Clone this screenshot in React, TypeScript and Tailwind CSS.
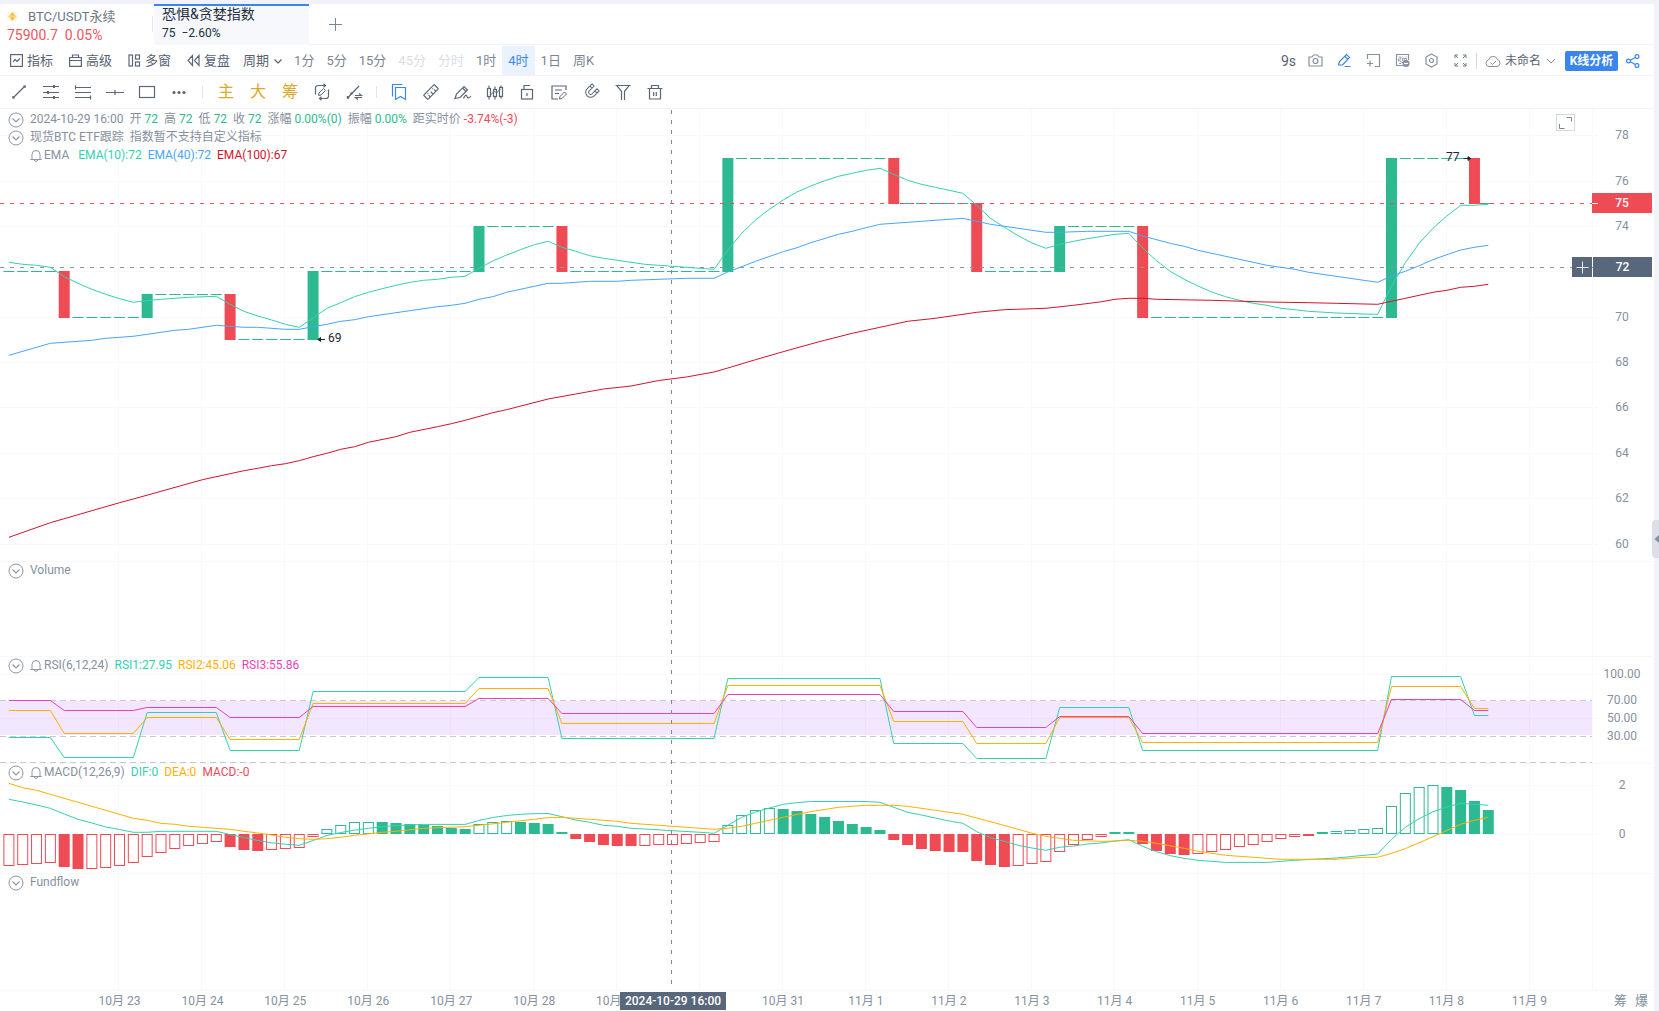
import type { ReactNode } from 'react';

type Pt = [number, number];

const PLOT_W = 1593;
const STEP = 13.826;
const cx = (i: number) => 8.9 + STEP * i;

const GREEN = '#2dba92';
const RED = '#ef4b55';
const TEAL = '#35d0b2';
const BLUE = '#45a6ff';
const CRIMSON = '#d0142a';
const ORANGE = '#ffb000';
const PINK = '#ec3fbb';

const ema10: Pt[] = [
  [0, 262.3], [1, 264.3], [2, 265.3], [3, 267.3], [4, 276.7], [5, 283.3], [6, 289.3], [7, 294.3], [8, 298.7], [9, 302.3],
  [10, 300.7], [11, 299.3], [13, 297.3], [15, 296.3], [16, 304.3], [17, 311.3], [18, 316], [19, 320], [20, 324.3], [21, 327.3],
  [22, 318], [23, 308.3], [24, 302.7], [25, 296.7], [26, 292.3], [27, 288.7], [28, 285.3], [29, 282.3], [30, 280.3], [31, 279.3],
  [32, 277.3], [33, 276.3], [34, 268.3], [35, 261], [36, 255], [37, 249.7], [38, 244.7], [39, 241.3], [40, 247.3], [41, 251.3],
  [42, 255.7], [43, 258.3], [46, 264.3], [48, 266.3], [50, 268.3], [51, 269.3], [52, 250], [53, 233.3], [54, 220], [55, 209.3],
  [56, 200], [57, 192], [58, 186], [59, 180.7], [60, 176.3], [61, 173.3], [62, 170.3], [63, 168.3], [64, 174.3], [65, 180.3],
  [66, 184.3], [67, 187.3], [68, 190.3], [69, 193.3], [70, 205.3], [71, 218.3], [72, 227.3], [73, 235.7], [74, 243], [75, 248.3],
  [76, 244.3], [77, 241.3], [78, 238.7], [79, 236.5], [80, 234.3], [81, 233.3], [82, 248], [83, 260.7], [84, 271.3], [85, 279.3],
  [86, 286], [87, 292], [88, 296.7], [89, 300.3], [90, 303.3], [91, 305.3], [92, 308.3], [93, 309.7], [94, 311.3], [96, 313],
  [98, 314], [99, 314.3], [100, 286], [101, 262.7], [102, 243.3], [103, 228.3], [104, 216], [105, 205.3], [106, 205.3], [107, 204.3],
];
const ema40: Pt[] = [
  [0, 355.3], [3, 343.3], [6, 340.3], [7, 338.3], [9, 336.3], [12, 330.3], [13, 329.3], [15, 325.3], [17, 327.3], [18, 327.3],
  [20, 329.3], [21, 329.3], [22, 326.7], [23, 324.3], [24, 321.3], [25, 319.7], [26, 316.7], [31, 306.7], [32, 305.3], [33, 303.3],
  [34, 299.3], [35, 296.7], [36, 292.3], [38, 286.3], [39, 283.3], [40, 283.3], [42, 281.3], [44, 281.3], [45, 280.3], [49, 278.3],
  [51, 278.3], [52, 272], [54, 261.3], [56, 251.7], [57, 247.7], [58, 242.7], [60, 234.3], [61, 231.3], [62, 227.7], [63, 224.3],
  [66, 221.3], [69, 218.3], [70, 221.3], [71, 224.3], [74, 230.3], [75, 232.3], [76, 232.3], [78, 231.3], [81, 231.3], [82, 236],
  [84, 243.3], [85, 246.3], [86, 250.3], [91, 265.3], [93, 269.3], [94, 272.3], [99, 282.3], [100, 276], [101, 271.3], [102, 265.7],
  [103, 259.7], [104, 254.7], [105, 250], [106, 247.3], [107, 245.3],
];
const ema100: Pt[] = [
  [0, 537.3], [3, 522.7], [8, 502.7], [9, 499], [14, 479.7], [17, 470.7], [18, 468.3], [19, 465.7], [20, 463.7], [21, 460.7],
  [22, 456.7], [23, 453.3], [24, 449.3], [25, 446.7], [26, 442.3], [28, 436.7], [29, 432.3], [31, 426.7], [32, 423.7], [33, 420.3],
  [35, 412.7], [36, 409.7], [39, 399], [41, 394], [43, 389], [45, 386], [47, 380.5], [49, 377], [51, 372],
  [52, 368], [54, 359.7], [56, 351.7], [58, 344], [59, 340.3], [61, 333.3], [63, 327.3], [65, 321.3], [67, 318.3], [69, 314.3],
  [70, 312.3], [72, 309.7], [75, 308.3], [77, 305.3], [79, 301.8], [80, 299.3], [81, 298.3], [82, 298.3], [83, 299.3], [87, 300.3],
  [91, 302], [94, 302.7], [96, 303.3], [99, 304.3], [100, 301.3], [101, 298.3], [103, 292.3], [104, 290.3], [105, 287.3], [106, 286.3],
  [107, 284.3],
];

/* first and last bar of every stretch of equal RSI values */
const runs: Pt[] = [
  [0, 3], [4, 9], [10, 15], [16, 21], [22, 33], [34, 39], [40, 51], [52, 63], [64, 69], [70, 75], [76, 81], [82, 99], [100, 105], [106, 107],
];
const rsiSeries: { color: string; ys: number[] }[] = [
  { color: TEAL, ys: [737.5, 757.5, 712.5, 750.5, 691.5, 677.5, 738.5, 678.5, 743.5, 758.5, 707.5, 750.5, 676.5, 715.5] },
  { color: ORANGE, ys: [710.5, 733.5, 717.5, 739.5, 703.5, 688.5, 723.5, 685.5, 721.5, 743.5, 717.5, 742.5, 686.5, 708.5] },
  { color: PINK, ys: [700.5, 710.5, 707.5, 717.5, 706.5, 698.5, 713.5, 694.5, 711.5, 727.5, 716.5, 733.5, 699.5, 710.5] },
];

const dif: Pt[] = [
  [0, 799.3], [1, 802], [2, 805], [3, 808.3], [4, 814], [5, 819.3], [6, 823], [7, 827], [8, 829.5], [9, 832.3],
  [10, 832.3], [11, 831.3], [15, 831.3], [16, 834.5], [17, 837.5], [18, 840.5], [19, 842.8], [20, 844.2], [21, 845.3], [22, 840.5],
  [23, 835.5], [24, 832.5], [25, 830.2], [26, 828.3], [27, 826.7], [28, 825.5], [30, 824.4], [33, 824.4], [34, 820.5], [35, 817.5],
  [36, 815.5], [37, 814.3], [38, 813.7], [39, 813.5], [40, 816.7], [41, 820], [42, 822.3], [43, 825.3], [44, 826.3], [45, 828.3],
  [46, 829], [48, 830.7], [50, 832.3], [51, 833.3], [52, 825.3], [53, 817.3], [54, 812], [55, 808], [56, 804.3], [57, 802.7],
  [58, 801.5], [62, 801.5], [63, 802.3], [64, 807.3], [65, 812.3], [66, 815], [67, 818], [68, 821], [69, 823.3], [70, 831.7],
  [71, 837.7], [72, 841.3], [73, 845.3], [74, 848], [75, 850.3], [76, 847.3], [77, 846], [78, 844], [79, 843], [80, 841],
  [81, 839.7], [82, 846.3], [83, 851.7], [84, 855.7], [85, 858.3], [86, 860.3], [88, 862.4], [91, 862.4], [93, 860.3], [96, 858],
  [99, 854], [100, 839.3], [101, 827.3], [102, 818.7], [103, 811.7], [104, 807], [105, 803.3], [106, 804.3], [107, 805.3],
];
const dea: Pt[] = [
  [0, 783.3], [1, 787.7], [2, 790.3], [3, 794.3], [9, 818.3], [10, 820.3], [11, 823.3], [12, 824.3], [13, 826.3], [16, 829.3],
  [17, 831.3], [18, 833], [19, 835], [20, 837.3], [21, 838.7], [22, 839.3], [23, 838.7], [24, 837.3], [25, 835.3], [27, 832.3],
  [28, 831.3], [30, 828.3], [31, 827.7], [33, 826.7], [34, 825.3], [36, 822.3], [38, 819.3], [39, 817.7], [40, 817.3], [41, 818.3],
  [44, 821.3], [45, 823.3], [48, 826.3], [51, 829.3], [52, 828.3], [53, 826.3], [54, 823.3], [56, 817.3], [58, 811.7], [60, 807.3],
  [62, 805.3], [64, 805.3], [65, 806.3], [67, 810.3], [69, 814.3], [70, 818], [71, 821.7], [73, 829.3], [74, 833.3], [75, 836.3],
  [76, 838.3], [77, 840.3], [79, 841.3], [80, 841], [81, 840.3], [82, 841.3], [83, 843.3], [85, 848.3], [86, 851.3], [88, 855.3],
  [92, 859.3], [96, 859.3], [98, 857.3], [99, 857.3], [100, 853.3], [101, 848.7], [103, 836.7], [105, 824.3], [106, 820.3], [107, 817.3],
];

/* signed bar heights of the MACD histogram */
const hist = [
  -32, -31, -30, -29, -33, -35, -35, -34, -32, -29, -23, -19, -15, -12, -10, -8, -13, -16, -17, -16, -15, -14, -3,
  5, 9, 12, 12, 12, 11, 10, 9, 8, 6, 5, 10, 12, 13, 12, 11, 10, 2,
  -5, -8, -11, -12, -12, -12, -11, -11, -10, -9, -8, 9, 19, 24, 26, 25, 23, 20, 17, 13, 10, 7, 4,
  -6, -11, -15, -17, -18, -18, -27, -31, -33, -32, -30, -28, -18, -11, -6, -3, 2, 2,
  -10, -17, -20, -21, -20, -18, -16, -13, -11, -8, -5, -3, -2, 2, 3, 4, 5, 6, 28, 41, 47, 49, 47, 44, 33, 24,
];
const filledRanges: Pt[] = [
  [4, 5], [16, 18], [27, 33], [37, 45], [56, 72], [80, 85], [94, 95], [104, 107],
];
const isFilled = (i: number) => filledRanges.some(([a, b]) => i >= a && i <= b);

/* [bar, top, bottom, rising] */
const candles: [number, number, number, boolean][] = [
  [4, 271, 318, false], [10, 294, 318, true], [16, 294, 340, false], [22, 271, 340, true], [34, 226, 272, true],
  [40, 226, 272, false], [52, 158, 272, true], [64, 158, 204, false], [70, 203, 272, false], [76, 226, 272, true],
  [82, 226, 318, false], [100, 158, 318, true], [106, 158, 204, false],
];
/* [first bar, last bar, y] */
const flats: [number, number, number][] = [
  [0, 3, 271.5], [5, 9, 317.5], [11, 15, 294.5], [17, 21, 339.5], [23, 33, 271.5], [35, 39, 226.5], [41, 51, 271.5],
  [53, 63, 158.5], [65, 69, 203.5], [71, 75, 271.5], [77, 81, 226.5], [83, 99, 317.5], [101, 105, 158.5], [107, 107, 203.5],
];

const toPoints = (pts: Pt[]) => pts.map(([i, y]) => `${cx(i)},${y}`).join(' ');
const pct = (x: number) => `${(x / PLOT_W) * 100}%`;

function Line({ pts, color }: { pts: Pt[]; color: string }) {
  return <polyline points={toPoints(pts)} fill="none" stroke={color} strokeWidth={1} />;
}

function HLine({ y, color, dash, x2 = PLOT_W }: { y: number; color: string; dash?: string; x2?: number }) {
  return <line x1={0} x2={x2} y1={y} y2={y} stroke={color} strokeDasharray={dash} />;
}

const dayLines = Array.from({ length: 18 }, (_, k) => 118.5 + 83 * k);

function Pane({ top, height, size, grid = [], labels, ticks = [], overlay, children }: {
  top: number;
  height: number;
  size: string;
  grid?: number[];
  labels: ReactNode;
  ticks?: [number, string][];
  overlay?: ReactNode;
  children?: ReactNode;
}) {
  return (
    <section className={`flex ${size} border-b border-[#f7f8fa]`}>
      <div className="relative min-w-0 flex-1">
        <svg
          className="absolute inset-0 h-full w-full overflow-visible"
          viewBox={`0 ${top} ${PLOT_W} ${height}`}
          preserveAspectRatio="none"
          aria-hidden="true"
        >
          {[...dayLines, 1592.5].map((x) => (
            <line key={x} x1={x} x2={x} y1={top} y2={top + height} stroke="#f8f9fb" />
          ))}
          {grid.map((y) => (
            <HLine key={y} y={y} color="#f8f9fb" x2={1598} />
          ))}
          {children}
        </svg>
        <div className="relative pl-2">{labels}</div>
        {overlay}
      </div>
      <div className="relative w-[59px] shrink-0 text-center">
        {ticks.map(([y, text]) => (
          <span key={text} className="absolute inset-x-0 -translate-y-1/2 pr-px leading-4" style={{ top: y - top }}>
            {text}
          </span>
        ))}
      </div>
    </section>
  );
}

function Collapse() {
  return (
    <button type="button" aria-label="收起" className="flex h-4 w-4 items-center justify-center">
      <svg width="16" height="18" viewBox="0 0 16 18" className="shrink-0" fill="none" stroke="#8d97a5">
        <circle cx="8" cy="10" r="7" />
        <path d="M4.5 8.500 8 12l3.500-3.500" strokeWidth="1.200" />
      </svg>
    </button>
  );
}

function Bell() {
  return (
    <svg width="12" height="13" viewBox="0 0 12 13" fill="none" stroke="#8d97a5">
      <path d="M.3 10.500h11.400M2 10.500V5.500a4 4 0 0 1 8 0v5M4.300 11c.4 1.800 3 1.800 3.400 0" />
    </svg>
  );
}

function Ico({ children, size = 18, color = '#5b6778' }: { children: ReactNode; size?: number; color?: string }) {
  return (
    <svg width={size} height={size} viewBox={`0 0 ${size} ${size}`} fill="none" stroke={color} strokeWidth="1.2" aria-hidden="true">
      {children}
    </svg>
  );
}

const drawTools: { name: string; icon: ReactNode }[] = [
  { name: '线段', icon: <Ico><path d="m4 14 10-10" /><rect x="2.2" y="13.2" width="2.4" height="2.4" fill="#5b6778" stroke="none" /><rect x="13.4" y="2.4" width="2.4" height="2.4" fill="#5b6778" stroke="none" /></Ico> },
  { name: '平行线', icon: <Ico><path d="M1 3.5h16M1 9.5h16M1 14.5h16" /><path d="M12 2v3M6 8v3M12 13v3" strokeWidth="2" /></Ico> },
  { name: '价格通道', icon: <Ico><path d="M1 4.5h16M1 9.5h16M1 14.5h16M1.5 2.5v4M16.5 12.5v4" /></Ico> },
  { name: '水平线', icon: <Ico><path d="M0 9.5h18M9 7v5" /></Ico> },
  { name: '矩形', icon: <Ico><rect x="1.5" y="3.5" width="15" height="11" /></Ico> },
  { name: '更多', icon: <Ico><g fill="#5b6778" stroke="none"><circle cx="4" cy="9.5" r="1.6" /><circle cx="9" cy="9.5" r="1.6" /><circle cx="14" cy="9.5" r="1.6" /></g></Ico> },
];

const goldTools = ['主', '大', '筹'];

const syncTools: { name: string; icon: ReactNode }[] = [
  { name: '连续绘制', icon: <Ico><path d="M2.500 11.500V5A2.500 2.500 0 0 1 5 2.500h7.500M10.500.8l2 1.700-2 1.700M15.500 6.500v6.500a2.500 2.500 0 0 1-2.500 2.500H6.500M8.500 13.800l-2 1.700 2 1.700" /><path d="m5.500 12.500.5-2.500 4.500-4.500 2 2L8 12z" strokeWidth="1" /></Ico> },
  { name: '画线切换', icon: <Ico><path d="M2.500 15 14 3" /><circle cx="3" cy="14.500" r=".8" fill="#5b6778" /><circle cx="6.500" cy="10.500" r=".6" fill="#5b6778" /><path d="M10 12.500h6.500l-2.500-2M17 14.500h-6.500l2.500 2" /></Ico> },
];

const editTools: { name: string; icon: ReactNode }[] = [
  { name: '收藏', icon: <Ico color="#3a86ee"><path d="M5.5 4.500h10v12l-5-3-5 3zM2.500 13.500v-12h10" /></Ico> },
  { name: '测量', icon: <Ico><g transform="rotate(-45 9 9)"><rect x="1.500" y="6" width="15" height="6" rx=".5" /><path d="M5 9.500V12M9 8.500V12M13 9.500V12M5 8h1M12 8h1" /></g></Ico> },
  { name: '画笔', icon: <Ico><path d="M1 15.500 2.500 11 10 3.500l3.500 3.500L6 14.500zM8.500 5l3.500 3.500" /><path d="M9.500 15.500c1.500-4 3-4 3.500-2s2 2 4-.5" /></Ico> },
  { name: 'K线', icon: <Ico><path d="M3 2.500v3M3 13.500v3M9 3.500v3M9 13.500v3M15 2.500v2M15 13.500v2" /><rect x="1.500" y="5.500" width="3" height="8" /><rect x="7.500" y="6.500" width="3" height="7" /><rect x="13.500" y="4.500" width="3" height="9" /><path d="m4.500 12 4-4 2 2 4-4" strokeWidth="1" /></Ico> },
  { name: '锁定', icon: <Ico><rect x="3.500" y="6.500" width="11" height="9.500" /><path d="M6 6.500v-4h6M9 10v3" /></Ico> },
  { name: '备注', icon: <Ico><path d="M16 7V3H2v13h6M5 7h7M5 10.500h4" /><path d="m9.500 16 .5-2.500 4.500-4.500 2 2-4.500 4.500z" strokeWidth="1" /></Ico> },
  { name: '磁吸', icon: <Ico><path transform="rotate(45 9 9)" d="M4 2.500v7a5 5 0 0 0 10 0v-7h-3v7a2 2 0 0 1-4 0v-7zM4 5.500h3M11 5.500h3" strokeWidth="1" /></Ico> },
  { name: '筛选', icon: <Ico><path d="M1.500 2.500h15M3 2.800l4.500 5.500V17M15 2.800l-4.500 5.500V17" color="#8690a0" /></Ico> },
  { name: '删除', icon: <Ico><path d="M1.500 5.500h15M5.500 5.500v-3h7v3M3.500 5.500v10.500h11V5.500M7.700 9v4M10.300 9v4" /></Ico> },
];

const menuTools: { name: string; icon: ReactNode }[] = [
  { name: '指标', icon: <Ico size={13}><rect x=".6" y=".6" width="11.800" height="11.800" /><path d="m3 8 2-2.500 2 2L10 4.500" /></Ico> },
  { name: '高级', icon: <Ico size={13}><path d="M.6 3.500h11.800v8.900H.6zM3.500 3.500V1h6v2.500M.6 6.500h11.800" /></Ico> },
  { name: '多窗', icon: <Ico size={13}><rect x="1" y="1" width="3.500" height="11" /><rect x="7.500" y="1" width="4" height="4" /><rect x="7.500" y="8" width="4" height="4" /></Ico> },
  { name: '复盘', icon: <Ico size={13}><path d="M5.500 1.500v10L1 6.500zM12 1.500v10L7.500 6.500z" /></Ico> },
];

const periods: { name: string; tone: string }[] = [
  { name: '1分', tone: 'text-[#7b8594]' },
  { name: '5分', tone: 'text-[#7b8594]' },
  { name: '15分', tone: 'text-[#7b8594]' },
  { name: '45分', tone: 'text-[#dadde2]' },
  { name: '分时', tone: 'text-[#dadde2]' },
  { name: '1时', tone: 'text-[#7b8594]' },
  { name: '4时', tone: 'bg-[#eaf2fd] text-[#3a86ee]' },
  { name: '1日', tone: 'text-[#7b8594]' },
  { name: '周K', tone: 'text-[#7b8594]' },
];

const viewTools: { name: string; icon: ReactNode }[] = [
  { name: '截图', icon: <Ico size={15} color="#8690a0"><path d="M1 4h3l1.500-2h4L11 4h3v9H1z" /><circle cx="7.500" cy="8" r="2.500" /></Ico> },
  { name: '画线', icon: <Ico size={15} color="#3a86ee"><path d="M1.500 12 2.500 8.500 9.500 1.500l3 3-7 7.500zM8 3.500l2.500 2.500M7.500 13.500h6" /></Ico> },
  { name: '新增窗口', icon: <Ico size={15} color="#8690a0"><path d="M1.500 6V1.500h12v12H9M1 10.500h6M4 7.500v6" /></Ico> },
  { name: '弹幕', icon: <Ico size={15} color="#8690a0"><path d="M13.500 7V1.500h-12v11H8" /><path d="M3.500 4h2.500v2H3.500v2h2.500v2.500H4M7.500 3.500l.8 1M11.500 3.500l-.8 1M7.500 5.500h4v2.500h-4zM9.500 5.500v5M7 9.500h3" strokeWidth=".8" /><circle cx="11" cy="10.500" r="3.500" fill="#8690a0" stroke="none" /><path d="M9 10.500h4" stroke="#fff" /></Ico> },
  { name: '设置', icon: <Ico size={15} color="#8690a0"><path d="m7.500 1 5.500 3v7l-5.500 3L2 11V4z" /><circle cx="7.500" cy="7.500" r="2" /></Ico> },
  { name: '全屏', icon: <Ico size={15} color="#6e7a8a"><path d="M2 5V2h3M10 2h3v3M13 10v3h-3M5 13H2v-3M2.300 2.300l2.700 2.700M12.700 2.300 10 5M12.700 12.700 10 10M2.300 12.700 5 10" strokeWidth="1" /></Ico> },
];

const ohlc: [string, string][] = [
  ['开', '72'], ['高', '72'], ['低', '72'], ['收', '72'], ['涨幅', '0.00%(0)'], ['振幅', '0.00%'],
];

/* the day under the crosshair tag stays blank */
const dates = [
  '10月 23', '10月 24', '10月 25', '10月 26', '10月 27', '10月 28', '10月 29', '', '10月 31',
  '11月 1', '11月 2', '11月 3', '11月 4', '11月 5', '11月 6', '11月 7', '11月 8', '11月 9',
];

export default function App() {
  return (
    <div className="min-h-screen bg-[#f1f3f8] pt-1 pr-[5px] font-['Roboto','Noto_Sans_CJK_SC',sans-serif] text-xs text-[#8690a0]">
      <div className="relative flex min-h-[1007px] flex-col overflow-hidden bg-white">
        <header className="flex h-[41px]">
          <button type="button" className="flex w-[152px] flex-col pt-[3px] pl-[7px] text-left">
            <span className="flex h-[19px] items-center gap-[10px] text-[13px] text-[#6c7686]">
              <svg width="11" height="11" viewBox="0 0 11 11">
                <circle cx="5.500" cy="5.500" r="5.500" fill="#fdf6ea" />
                <path d="M5.500 1.300 9.700 5.500 5.500 9.700 1.300 5.500z" fill="#fad27c" />
                <path d="m5.500 1.500 1.700 1.700-1.700 1.700-1.700-1.700zM5.500 6.100l1.700 1.700-1.700 1.700-1.700-1.700z" fill="#f6bb35" />
              </svg>
              BTC/USDT永续
            </span>
            <span className="h-[18px] text-sm leading-[18px] whitespace-pre text-[#ee5560]">75900.7&nbsp; 0.05%</span>
          </button>
          <span className="mt-3 mr-px h-4 w-px bg-[#dfe3ea]" />
          <button type="button" className="flex w-[155px] flex-col border-t-2 border-[#3a86ee] bg-[#f6f8fb] pl-2 text-left text-[#222d3d]">
            <span className="h-[18px] text-sm leading-4">恐惧&amp;贪婪指数</span>
            <span className="h-[18px] leading-[18px] whitespace-pre">75&nbsp; −2.60%</span>
          </button>
          <div className="flex flex-1 border-b border-[#f1f3f8] pl-5">
            <button type="button" aria-label="新增标签">
              <svg width="13" height="13" viewBox="0 0 13 13" stroke="#7b8594"><path d="M6.5 0v13M0 6.5h13" /></svg>
            </button>
          </div>
        </header>

        <nav className="flex h-[31px] items-stretch border-b border-[#f1f3f8] pt-px pr-[14px] pl-[10px] text-[13px] text-[#566273]">
          <div className="flex items-center gap-4">
            {menuTools.map((t) => (
              <button key={t.name} type="button" className="flex items-center gap-1">
                {t.icon}
                {t.name}
              </button>
            ))}
          </div>
          <button type="button" className="mr-[5px] ml-[13px] flex items-center gap-1">
            周期
            <svg width="10" height="10" viewBox="0 0 10 10" fill="none" stroke="#566273" strokeWidth="1.2"><path d="M1.5 3.500 5 7l3.500-3.500" /></svg>
          </button>
          {periods.map((p) => (
            <button key={p.name} type="button" className={`px-[6px] ${p.tone}`}>{p.name}</button>
          ))}
          <div className="ml-auto flex items-center">
            <span className="mr-3 text-sm">9s</span>
            <div className="flex items-center gap-[14px]">
              {viewTools.map((t) => (
                <button key={t.name} type="button" aria-label={t.name}>{t.icon}</button>
              ))}
            </div>
            <span className="mx-2 h-4 w-px bg-[#d5d9df]" />
            <button type="button" className="flex items-center gap-1 text-xs">
              <svg width="16" height="14" viewBox="0 0 16 14" fill="none" stroke="#8690a0">
                <path d="M4 12.500a3.300 3.300 0 0 1-.5-6.500 4.700 4.700 0 0 1 9-.5 3.600 3.600 0 0 1-.5 7zM5.500 8.500l2 2 3.500-3.500" />
              </svg>
              未命名
              <svg width="12" height="10" viewBox="0 0 12 10" fill="none" stroke="#8690a0"><path d="m2 3 4 4 4-4" /></svg>
            </button>
            <button type="button" className="mx-2 h-5 w-[53px] rounded-xs bg-[#3a86ee] text-xs font-bold text-white">K线分析</button>
            <button type="button" aria-label="分享">
              <Ico size={14} color="#3a86ee">
                <circle cx="2.500" cy="7" r="1.900" />
                <circle cx="11" cy="2.500" r="1.900" />
                <circle cx="11" cy="11.500" r="1.900" />
                <path d="m4.300 6.200 5-2.700M4.300 7.800l5 2.700" />
              </Ico>
            </button>
          </div>
        </nav>

        <nav className="flex h-[33px] items-center border-b border-[#f1f3f8] pl-[3px]">
          {drawTools.map((t) => (
            <button key={t.name} type="button" aria-label={t.name} className="flex w-8 justify-center">{t.icon}</button>
          ))}
          <span className="mx-[7px] h-3 w-px bg-[#dfe3ea]" />
          {goldTools.map((t) => (
            <button key={t} type="button" className="w-8 text-base leading-none text-[#dba928]">{t}</button>
          ))}
          {syncTools.map((t) => (
            <button key={t.name} type="button" aria-label={t.name} className="flex w-8 justify-center">{t.icon}</button>
          ))}
          <span className="mx-[6px] h-3 w-px bg-[#dfe3ea]" />
          {editTools.map((t) => (
            <button key={t.name} type="button" aria-label={t.name} className="flex w-8 justify-center">{t.icon}</button>
          ))}
        </nav>

        <main className="relative flex flex-1 flex-col pr-[2px]">
          <Pane
            top={109}
            height={452}
            size="h-[453px]"
            grid={[135.5, 181.5, 226.5, 271.5, 317.5, 362.5, 407.5, 453.5, 498.5, 544.5]}
            ticks={[[135, '78'], [181, '76'], [226, '74'], [317, '70'], [362, '68'], [407, '66'], [453, '64'], [498, '62'], [544, '60']]}
            labels={
              <div className="pt-px">
                <div className="flex h-[18px] items-center gap-[6px]">
                  <Collapse />
                  <span>2024-10-29 16:00</span>
                  {ohlc.map(([k, v], n) => (
                    <span key={n}>
                      {k} <span className="text-[#2dba92]">{v}</span>
                    </span>
                  ))}
                  <span>
                    距实时价 <span className="text-[#ef4b55]">-3.74%(-3)</span>
                  </span>
                </div>
                <div className="flex h-[18px] items-center gap-[6px]">
                  <Collapse />
                  <span>现货BTC ETF跟踪</span>
                  <span>指数暂不支持自定义指标</span>
                </div>
                <div className="flex h-[18px] items-center gap-[6px] pl-[22px]">
                  <span className="mr-[3px] flex items-center gap-0.5"><Bell />EMA</span>
                  <span className="text-[#35d0b2]">EMA(10):72</span>
                  <span className="text-[#45a6ff]">EMA(40):72</span>
                  <span className="text-[#d0142a]">EMA(100):67</span>
                </div>
              </div>
            }
            overlay={
              <>
                <span className="absolute top-[221px] leading-4 text-[#1d2733]" style={{ left: pct(328) }}>69</span>
                <span className="absolute top-10 leading-4 text-[#1d2733]" style={{ left: pct(1446) }}>77</span>
                <button type="button" aria-label="放大" className="absolute top-[5px] right-[18px] flex h-[17px] w-[19px] items-center justify-center border border-[#d3d8df]">
                  <svg width="13" height="12" viewBox="0 0 13 12" fill="none" stroke="#7b8594"><path d="M7.500.5h5v4M.5 7v4.500h5" /></svg>
                </button>
                <button type="button" aria-label="添加提醒" className="absolute top-[148px] right-0 mr-px flex h-5 w-5 items-center justify-center bg-[#58677c]">
                  <svg width="13" height="13" viewBox="0 0 13 13" stroke="#e7eaee"><path d="M6.5.5v12M.5 6.5h12" /></svg>
                </button>
                <span className="absolute top-[148px] left-full z-10 h-5 w-[59px] bg-[#58677c] text-center leading-5 font-medium text-white">72</span>
                <span className="absolute top-[84px] left-full z-10 -ml-px h-5 w-[60px] bg-[#ef4b55] text-center leading-5 font-medium text-white">75</span>
                <span className="absolute top-[94px] left-full z-10 -ml-px h-px w-[6px] bg-white" />
              </>
            }
          >
            {flats.flatMap(([a, b, y]) =>
              Array.from({ length: b - a + 1 }, (_, k) => (
                <line key={`${a}-${k}`} x1={cx(a + k) - 5.5} x2={cx(a + k) + 5.5} y1={y} y2={y} stroke={GREEN} />
              )),
            )}
            {candles.map(([i, t, b, up]) => (
              <rect key={i} x={cx(i) - 5.5} y={t} width={11} height={b - t} fill={up ? GREEN : RED} />
            ))}
            <HLine y={203.5} color={RED} dash="4 6" />
            <HLine y={267.5} color="#8a94a2" dash="4 6" />
            <Line pts={ema10} color={TEAL} />
            <Line pts={ema40} color={BLUE} />
            <Line pts={ema100} color={CRIMSON} />
            <path d="M317.5 339.5h7.500M320.500 337.500l-2.500 2 2.500 2zM1463.500 158.500h7.500M1468 156.500l2.500 2-2.500 2z" stroke="#1d2733" fill="#1d2733" />
          </Pane>

          <Pane
            top={562}
            height={94}
            size="h-[95px]"
            labels={<div className="flex h-4 items-center gap-[6px]"><Collapse /><span>Volume</span></div>}
          />

          <Pane
            top={657}
            height={106}
            size="h-[107px]"
            grid={[674.5, 718.5]}
            ticks={[[674, '100.00'], [700, '70.00'], [718, '50.00'], [736, '30.00']]}
            labels={
              <div className="flex h-4 items-center gap-[6px]">
                <Collapse />
                <span className="flex items-center gap-0.5"><Bell />RSI(6,12,24)</span>
                <span className="text-[#35d0b2]">RSI1:27.95</span>
                <span className="text-[#ffb000]">RSI2:45.06</span>
                <span className="text-[#ec3fbb]">RSI3:55.86</span>
              </div>
            }
          >
            <rect x={0} y={701} width={1592} height={34} fill="#a03cff" fillOpacity={0.13} />
            <HLine y={700.5} color="#c9c9c9" dash="6 4" x2={1592} />
            <HLine y={736.5} color="#c9c9c9" dash="6 4" x2={1592} />
            <HLine y={762.5} color="#c9c9c9" dash="6 4" x2={1592} />
            {rsiSeries.map((s) => (
              <Line key={s.color} color={s.color} pts={s.ys.flatMap((y, n): Pt[] => [[runs[n][0], y], [runs[n][1], y]])} />
            ))}
          </Pane>

          <Pane
            top={764}
            height={109}
            size="h-[110px]"
            grid={[785.5, 834.5]}
            ticks={[[785, '2'], [834, '0']]}
            labels={
              <div className="flex h-4 items-center gap-[6px]">
                <Collapse />
                <span className="flex items-center gap-0.5"><Bell />MACD(12,26,9)</span>
                <span className="text-[#35d0b2]">DIF:0</span>
                <span className="text-[#ffb000]">DEA:0</span>
                <span className="text-[#ef4b55]">MACD:-0</span>
              </div>
            }
          >
            {hist.map((h, i) => {
              const color = h > 0 ? GREEN : RED;
              const y = h > 0 ? 834 - h : 834;
              return isFilled(i) ? (
                <rect key={i} x={cx(i) - 5.5} y={y} width={11} height={Math.abs(h)} fill={color} />
              ) : (
                <rect key={i} x={cx(i) - 5} y={y + 0.5} width={10} height={Math.abs(h) - 1} fill="none" stroke={color} />
              );
            })}
            <Line pts={dif} color={TEAL} />
            <Line pts={dea} color={ORANGE} />
          </Pane>

          <Pane
            top={874}
            height={116}
            size="h-[117px]"
            labels={<div className="flex h-4 items-center gap-[6px]"><Collapse /><span>Fundflow</span></div>}
          />

          <div className="relative flex h-5 items-center">
            <div className="flex flex-1 pr-[22px] pl-[78px]">
              {dates.map((d, n) => (
                <span key={n} className="flex-1 text-center">{d}</span>
              ))}
            </div>
            <div className="flex w-[59px] justify-center gap-2 pl-[17px] text-[13px]">
              <button type="button">筹</button>
              <button type="button">爆</button>
            </div>
          </div>

          <div className="pointer-events-none absolute inset-y-0 right-[61px] left-0">
            <svg className="absolute h-[877px] w-px" style={{ left: pct(671) }} aria-hidden="true">
              <line x1=".5" x2=".5" y1="1" y2="877" stroke="#7f8a99" strokeDasharray="4 6" />
            </svg>
            <span
              className="absolute bottom-px flex h-[18px] w-[106px] -translate-x-1/2 items-center justify-center bg-[#58677c] font-medium text-white"
              style={{ left: pct(673) }}
            >
              2024-10-29 16:00
            </span>
          </div>
        </main>
      </div>
      <button type="button" aria-label="展开侧栏" className="absolute top-[520px] right-0 flex h-[38px] w-[7px] items-center justify-end rounded-l-sm bg-[#dcdfe6]">
        <svg width="5" height="8" viewBox="0 0 5 8" fill="#8690a0"><path d="M5 0v8L.5 4z" /></svg>
      </button>
    </div>
  );
}
